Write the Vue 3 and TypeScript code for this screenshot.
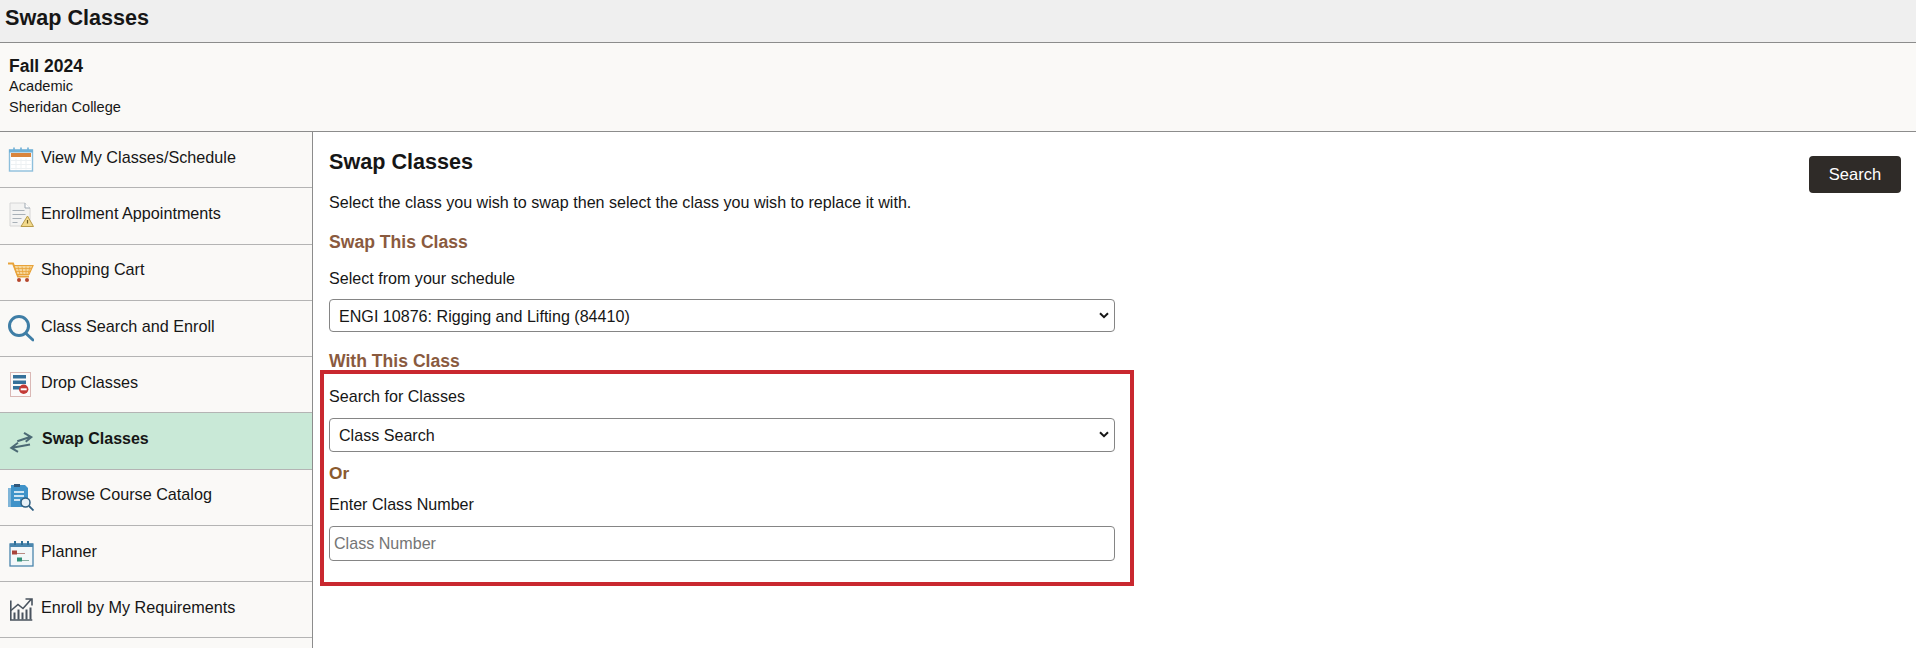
<script setup lang="ts">
const navItems: { key: string; label: string; active?: boolean }[] = [
  { key: 'calendar', label: 'View My Classes/Schedule' },
  { key: 'appointment', label: 'Enrollment Appointments' },
  { key: 'cart', label: 'Shopping Cart' },
  { key: 'search', label: 'Class Search and Enroll' },
  { key: 'drop', label: 'Drop Classes' },
  { key: 'swap', label: 'Swap Classes', active: true },
  { key: 'catalog', label: 'Browse Course Catalog' },
  { key: 'planner', label: 'Planner' },
  { key: 'requirements', label: 'Enroll by My Requirements' },
]
</script>

<template>
  <div class="page">
    <header class="banner"><h1>Swap Classes</h1></header>
    <section class="term">
      <div class="term-name">Fall 2024</div>
      <div class="term-line">Academic</div>
      <div class="term-line">Sheridan College</div>
    </section>
    <div class="body">
      <nav class="sidebar">
        <a v-for="item in navItems" :key="item.key" class="nav-item" :class="{ active: item.active }">
          <svg class="nav-icon" viewBox="0 0 26 27" aria-hidden="true">
            <g v-if="item.key === 'calendar'" transform="translate(0 .5)">
              <rect x="1.500" y="3.500" width="23" height="21" fill="#fff" stroke="#8dbfdc" stroke-width="1.400" />
              <rect x="1" y="3" width="24" height="3" fill="#6fb0d6" />
              <rect x="3" y="6.500" width="20" height="4" fill="#d9843c" />
              <path d="M6 1v3M13 1v3M20 1v3" stroke="#6fb0d6" stroke-width="1.600" />
              <path d="M3 14h20M3 18h20M3 22h20M8 12v11M13 12v11M18 12v11" stroke="#edf1f3" stroke-width="1" />
            </g>
            <g v-else-if="item.key === 'appointment'" transform="translate(0 -.5)">
              <path d="M2 1.500h15l5 5v18H2z" fill="#f3f3f2" stroke="#d6d6d6" />
              <path d="M17 1.500v5h5" fill="#fff" stroke="#9fa9b2" />
              <path d="M4.500 9h12M4.500 13h13M4.500 17h9M4.500 21h5" stroke="#a8b0b7" stroke-width="1.100" />
              <path d="M19.500 14.500l6 10.500h-12.500z" fill="#f2d98b" stroke="#b89b4a" />
              <path d="M19.500 18.500v3.500" stroke="#6d5a20" stroke-width="1.200" />
            </g>
            <g v-else-if="item.key === 'cart'" transform="translate(0 -.5)">
              <path d="M0 5h5l5 13h11" fill="none" stroke="#e8a33a" stroke-width="2" />
              <path d="M6 7h19l-4 9H9z" fill="#f6d79b" stroke="#e8a33a" stroke-width="1.200" />
              <path d="M10 8l2 8M14 8l1 8M18 8l0 8M22 8l-2 8M7 10h17M8 13h15" stroke="#e8a33a" stroke-width=".8" />
              <circle cx="11" cy="21.500" r="2" fill="#b5472d" />
              <circle cx="19" cy="21.500" r="2" fill="#b5472d" />
            </g>
            <g v-else-if="item.key === 'search'" transform="translate(0 -.5)">
              <circle cx="11" cy="11.500" r="9.500" fill="none" stroke="#3f7ea6" stroke-width="3" />
              <path d="M18 19l7 6.500" stroke="#3f7ea6" stroke-width="3" stroke-linecap="round" />
            </g>
            <g v-else-if="item.key === 'drop'" transform="translate(0 -1)">
              <rect x="2.500" y="2.500" width="20" height="24" fill="#fbfafa" stroke="#a8554f" stroke-width=".8" stroke-dasharray="1 1" />
              <rect x="5" y="5" width="13" height="3.500" fill="#35709a" />
              <rect x="5" y="10.500" width="13" height="3.500" fill="#35709a" />
              <rect x="5" y="16" width="9" height="3.500" fill="#35709a" />
              <circle cx="15.700" cy="19.300" r="4.700" fill="#c33a36" />
              <rect x="12.700" y="18.300" width="6" height="2" fill="#fff" />
            </g>
            <template v-else-if="item.key === 'swap'">
              <path d="M9.300 14.200L22.700 9.800M16 5.800l7.300 4.400-5.600 4.600" fill="none" stroke="#4c6a75" stroke-width="2" />
              <path d="M22 17.500L4.300 20.800M10 15.800l-6.700 5 6.700 4" fill="none" stroke="#4c6a75" stroke-width="2" />
            </template>
            <template v-else-if="item.key === 'catalog'">
              <path d="M0 4h3v19H0z" fill="#7fb5d8" />
              <path d="M3 1h14l3 3v19H3z" fill="#3f93c9" />
              <path d="M6 0h6v3H6z" fill="#31577a" />
              <path d="M6 8h10M6 12h10M6 16h6" stroke="#fff" stroke-width="1.300" />
              <circle cx="17.500" cy="18.500" r="4.500" fill="#e7f1f7" stroke="#2f5f82" stroke-width="1.500" />
              <path d="M21 22l4.500 4.500" stroke="#2f5f82" stroke-width="1.800" />
            </template>
            <template v-else-if="item.key === 'planner'">
              <rect x="2" y="4" width="23" height="22" fill="#f2f7f9" stroke="#4a86ad" stroke-width="1.300" />
              <rect x="2" y="3.500" width="23" height="3.500" fill="#4a86ad" />
              <path d="M7 1v4M14 1v4M20 1v4" stroke="#2f6f97" stroke-width="2" />
              <rect x="4" y="10.500" width="5" height="4" fill="#a8443c" />
              <path d="M9 13.500h8" stroke="#b98a84" />
              <rect x="9" y="17.500" width="5" height="4" fill="#2f9079" />
              <path d="M14 20.500h7" stroke="#86aca0" />
            </template>
            <g v-else transform="translate(0 -.5)">
              <path d="M2.800 5v19.500h21.500" fill="none" stroke="#49535e" stroke-width="1.600" />
              <path d="M3 15l7-6 5 4 8-9M17.500 3.500h6.500v6.500" fill="none" stroke="#49535e" stroke-width="1.600" />
              <path d="M6.500 17v7M10.500 14v10M14.500 17v7M18.500 14v10M22.500 12v12" stroke="#49535e" stroke-width="2" />
            </g>
          </svg>
          <span class="nav-label">{{ item.label }}</span>
        </a>
      </nav>
      <main class="content">
        <div class="content-head">
          <h2>Swap Classes</h2>
          <button class="search-btn" type="button">Search</button>
        </div>
        <p class="intro">Select the class you wish to swap then select the class you wish to replace it with.</p>
        <h3 class="section">Swap This Class</h3>
        <label class="field-label" for="schedule">Select from your schedule</label>
        <div class="select-wrap select-a">
          <select id="schedule" class="control">
            <option>ENGI 10876: Rigging and Lifting (84410)</option>
          </select>
          <svg class="chevron" viewBox="0 0 10 7" aria-hidden="true"><path d="M1 1.200l4 4 4-4" /></svg>
        </div>
        <h3 class="section with">With This Class</h3>
        <div class="highlight">
          <label class="field-label" for="search-for">Search for Classes</label>
          <div class="select-wrap select-b">
            <select id="search-for" class="control">
              <option>Class Search</option>
            </select>
            <svg class="chevron" viewBox="0 0 10 7" aria-hidden="true"><path d="M1 1.200l4 4 4-4" /></svg>
          </div>
          <div class="or">Or</div>
          <label class="field-label" for="number">Enter Class Number</label>
          <input id="number" class="control number" type="text" placeholder="Class Number" />
        </div>
      </main>
    </div>
  </div>
</template>

<style>
html, body { background: #fff; overflow: hidden; }
</style>

<style scoped>
.page {
  width: 1916px;
  height: 648px;
  overflow: hidden;
  display: flex;
  flex-direction: column;
  font-family: "Liberation Sans", Arial, sans-serif;
  color: #161616;
  font-size: 16px;
}
.banner {
  height: 42px;
  flex: none;
  background: #efefef;
  border-bottom: 1px solid #8c8c8c;
  padding-left: 5px;
}
.banner h1 {
  margin: 0;
  font-size: 21.600px;
  line-height: 35px;
  font-weight: 700;
}
.term {
  height: 88px;
  flex: none;
  background: #faf9f7;
  border-bottom: 1px solid #8c8c8c;
  padding-left: 9px;
}
.term-name {
  font-size: 17.500px;
  font-weight: 700;
  line-height: 20px;
  padding-top: 13px;
}
.term-line {
  font-size: 14.600px;
  line-height: 20.500px;
}
.body {
  flex: 1;
  display: flex;
  min-height: 0;
}
.sidebar {
  width: 312px;
  flex: none;
  background: #faf9f7;
  border-right: 1px solid #8c8c8c;
}
.nav-item {
  height: 56.250px;
  box-sizing: border-box;
  display: flex;
  align-items: center;
  gap: 7px;
  padding-left: 8px;
  border-bottom: 1px solid #b4b4b4;
  font-size: 16.200px;
}
.nav-label {
  margin-bottom: 4.500px;
}
.nav-item.active {
  background: #c9e9d7;
  font-weight: 700;
  font-size: 16px;
  gap: 8px;
}
.nav-icon {
  width: 26px;
  height: 27px;
  flex: none;
}
.content {
  flex: 1;
  min-width: 0;
  padding-left: 16px;
  background: #fff;
}
.content-head {
  display: flex;
  justify-content: space-between;
  align-items: flex-start;
  padding-right: 15px;
}
.content-head h2 {
  margin: 17px 0 0;
  font-size: 21.600px;
  line-height: 26px;
  font-weight: 700;
}
.search-btn {
  margin-top: 24px;
  width: 92px;
  height: 37px;
  border: 0;
  border-radius: 4px;
  background: #2f2b28;
  color: #fff;
  font: 16.500px "Liberation Sans", Arial, sans-serif;
}
.intro {
  margin: -1px 0 0;
  line-height: 20px;
  font-size: 16.100px;
}
.section {
  margin: 18px 0 0;
  font-size: 17.600px;
  line-height: 24px;
  font-weight: 700;
  color: #8a5a3e;
}
.field-label {
  display: block;
  margin-top: 13.500px;
  line-height: 20px;
  font-size: 16.100px;
}
.select-wrap {
  position: relative;
  width: 786px;
  margin-top: 11.500px;
}
.select-a { height: 33px; }
.select-b { height: 34px; }
.select-wrap select {
  height: 100%;
  appearance: none;
  padding-left: 9px;
}
.chevron {
  position: absolute;
  right: 6px;
  top: 50%;
  width: 10px;
  height: 7px;
  margin-top: -3.500px;
  pointer-events: none;
  fill: none;
  stroke: #161616;
  stroke-width: 2;
}
.control {
  display: block;
  box-sizing: border-box;
  width: 786px;
  background: #fff;
  border: 1px solid #858585;
  border-radius: 4px;
  color: #161616;
  font: 16.100px "Liberation Sans", Arial, sans-serif;
}
.with { margin: 17px 0 -3px; }
.highlight {
  box-sizing: border-box;
  width: 814px;
  height: 216px;
  margin-left: -9px;
  padding-left: 5px;
  border: 4px solid #c9282f;
}
.highlight .field-label:first-child { margin-top: 12px; }
.or {
  margin-top: 11px;
  font-size: 17.300px;
  line-height: 20px;
  font-weight: 700;
  color: #8a5a2e;
}
.highlight .field-label { margin-top: 11px; }
.number {
  height: 35px;
  margin-top: 12.500px;
  padding: 0 4px;
}
.number::placeholder { color: #757575; opacity: 1; }
</style>
